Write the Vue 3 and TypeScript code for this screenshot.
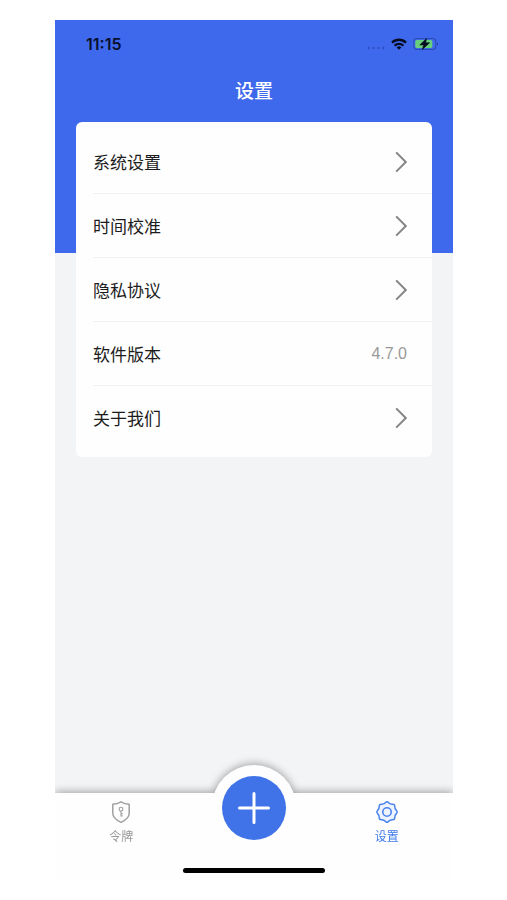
<script setup lang="ts">
interface SettingItem {
  label: string
  value?: string
}

const items: SettingItem[] = [
  { label: '系统设置' },
  { label: '时间校准' },
  { label: '隐私协议' },
  { label: '软件版本', value: '4.7.0' },
  { label: '关于我们' },
]

// Eight-lobed outline of the gear icon, alternating tip and notch radii.
const gearPath = (() => {
  const c = 12
  const point = (r: number, deg: number) => {
    const a = (deg * Math.PI) / 180
    return `${(c + r * Math.sin(a)).toFixed(2)} ${(c - r * Math.cos(a)).toFixed(2)}`
  }
  let d = `M${point(9.7, -8)}`
  for (let i = 0; i < 8; i++) {
    const t = i * 45
    d += `Q${point(10.9, t)} ${point(9.7, t + 8)}`
    d += `Q${point(8.2, t + 22.5)} ${point(9.7, t + 37)}`
  }
  return d + 'Z'
})()
</script>

<template>
  <div class="page">
    <div class="phone">
      <header class="header">
        <div class="status">
          <span class="time">11:15</span>
          <div class="status-icons">
            <svg class="dots" viewBox="0 0 18 6" aria-hidden="true">
              <g fill="#203a9c" opacity="0.5">
                <circle cx="1.8" cy="3" r="1.2" />
                <circle cx="6.6" cy="3" r="1.2" />
                <circle cx="11.4" cy="3" r="1.2" />
                <circle cx="16.2" cy="3" r="1.2" />
              </g>
            </svg>
            <svg class="wifi" viewBox="0 0 16 12" aria-hidden="true">
              <g fill="none" stroke="#050b20" stroke-width="2.3">
                <path d="M1 4.6a10 10 0 0 1 14 0" />
                <path d="M3.6 7.7a6.2 6.2 0 0 1 8.8 0" />
              </g>
              <path d="M8 11.8 5.7 9.4a3.3 3.3 0 0 1 4.6 0Z" fill="#050b20" />
            </svg>
            <svg class="battery" viewBox="0 0 26 14" aria-hidden="true">
              <rect x="0.8" y="1.5" width="22" height="11" rx="3" fill="none" stroke="#2c4cb4" stroke-width="1.1" />
              <rect x="2.3" y="3" width="17" height="8" rx="1.6" fill="#68d07c" />
              <path d="M24 5.2a2 2 0 0 1 0 3.6Z" fill="#26429f" />
              <path d="M13.6 1.5 6.8 7.9h3.8L9.4 12.5l7.2-6.7h-4Z" fill="#050b20" stroke="#050b20" stroke-width="0.6" />
            </svg>
          </div>
        </div>
        <h1 class="title">设置</h1>
      </header>

      <main class="content">
        <ul class="card">
          <li v-for="item in items" :key="item.label" class="item">
            <div v-if="item.value" class="row">
              <span>{{ item.label }}</span>
              <span class="value">{{ item.value }}</span>
            </div>
            <button v-else type="button" class="row">
              <span>{{ item.label }}</span>
              <svg class="chevron" viewBox="0 0 12 22" aria-hidden="true">
                <path d="M1.2 1.4 10.8 11 1.2 20.6" fill="none" stroke="#858585" stroke-width="2" />
              </svg>
            </button>
          </li>
        </ul>
      </main>

      <nav class="tabbar">
        <div class="tabs">
          <a class="tab" href="#tokens">
            <svg class="tab-icon" viewBox="0 0 24 24" fill="none" stroke="#a0a0a0" aria-hidden="true">
              <path d="M12 1.8c2.5 1.6 5 2.3 8.2 2.4v9c0 4.3-3.2 6.7-8.2 9.2-5-2.5-8.2-4.9-8.2-9.2v-9C7 4.1 9.5 3.4 12 1.8Z" stroke-width="1.5" stroke-linejoin="round" />
              <circle cx="12" cy="9.2" r="1.9" stroke-width="1.1" />
              <path d="M12 11.1v5.3M12 13.6h1.7M12 15.9h1.7" stroke-width="1.1" />
            </svg>
            <span>令牌</span>
          </a>
          <button type="button" class="add" aria-label="添加">
            <svg viewBox="0 0 32 32" aria-hidden="true">
              <path d="M16 1.5v29M1.5 16h29" stroke="#fff" stroke-width="3" stroke-linecap="round" />
            </svg>
          </button>
          <a class="tab active" href="#settings" aria-current="page">
            <svg class="tab-icon" viewBox="0 0 24 24" fill="none" stroke="#4a83ec" aria-hidden="true">
              <path :d="gearPath" fill="#edf4ff" stroke-width="1.5" stroke-linejoin="round" />
              <circle cx="12" cy="12" r="4.2" stroke-width="1.6" />
            </svg>
            <span>设置</span>
          </a>
        </div>
        <div class="home-indicator"></div>
      </nav>
    </div>
  </div>
</template>

<style>
body {
  background: #fff;
}
</style>

<style scoped>
.page {
  box-sizing: border-box;
  min-height: 100vh;
  padding: 20px 54px 20px 55px;
  display: flex;
  font-family: "Noto Sans CJK SC", "Noto Sans", sans-serif;
}

.phone {
  flex: 1;
  display: flex;
  flex-direction: column;
  overflow: hidden;
  background: #f2f4f6;
}

.header {
  padding-bottom: 147px;
  background: #3f69ed;
}

.status {
  display: flex;
  align-items: center;
  justify-content: space-between;
  height: 48px;
  padding: 0 14px 0 31px;
}

.time {
  color: #07102e;
  font-family: Inter, "Liberation Sans", sans-serif;
  font-size: 16px;
  font-weight: 600;
}

.status-icons {
  display: flex;
  align-items: center;
  gap: 6px;
}

.dots {
  width: 18px;
  height: 6px;
  margin-top: 8px;
}

.wifi {
  width: 16px;
  height: 12px;
}

.battery {
  width: 26px;
  height: 14px;
}

.title {
  margin: 0;
  padding-top: 6px;
  color: #fff;
  font-size: 19px;
  font-weight: 500;
  line-height: 32px;
  text-align: center;
}

.content {
  flex: 1;
  margin-top: -131px;
  padding: 0 21px 24px;
}

.card {
  margin: 0;
  padding: 8px 0 7px;
  list-style: none;
  border-radius: 6px;
  background: #fefefe;
}

.item {
  padding-left: 17px;
}

.row {
  box-sizing: border-box;
  display: flex;
  align-items: center;
  justify-content: space-between;
  width: 100%;
  height: 64px;
  padding: 0 25px 0 0;
  border: 0;
  background: none;
  color: #1c1c1c;
  font: inherit;
  font-size: 17px;
  line-height: 24px;
  text-align: left;
}

.item:not(:last-child) .row {
  border-bottom: 1px solid #f0f1f2;
}

.value {
  color: #999;
  font-family: "Liberation Sans", sans-serif;
  font-size: 16px;
}

.chevron {
  width: 12px;
  height: 22px;
}

.tabbar {
  position: relative;
  background: #fefefe;
  filter: drop-shadow(0 -1px 4px rgba(0, 0, 0, 0.36));
}

.tabbar::before {
  content: "";
  position: absolute;
  top: -28px;
  left: 50%;
  width: 84px;
  height: 84px;
  border-radius: 50%;
  background: #fefefe;
  transform: translateX(-50%);
}

.tabs {
  position: relative;
  display: grid;
  grid-template-columns: 1fr 1fr 1fr;
  justify-items: center;
  height: 73px;
}

.tab {
  display: flex;
  flex-direction: column;
  align-items: center;
  gap: 2px;
  padding-top: 7px;
  color: #999;
  font-size: 12px;
  line-height: 20px;
  text-decoration: none;
}

.tab.active {
  color: #3f7be8;
}

.tab-icon {
  width: 24px;
  height: 24px;
}

.add {
  display: flex;
  align-items: center;
  justify-content: center;
  width: 64px;
  height: 64px;
  margin-top: -17px;
  padding: 0;
  border: 0;
  border-radius: 50%;
  background: #4073e8;
}

.add svg {
  width: 32px;
  height: 32px;
}

.home-indicator {
  width: 142px;
  height: 5px;
  margin: 2px auto 7px;
  border-radius: 3px;
  background: #000;
}
</style>
